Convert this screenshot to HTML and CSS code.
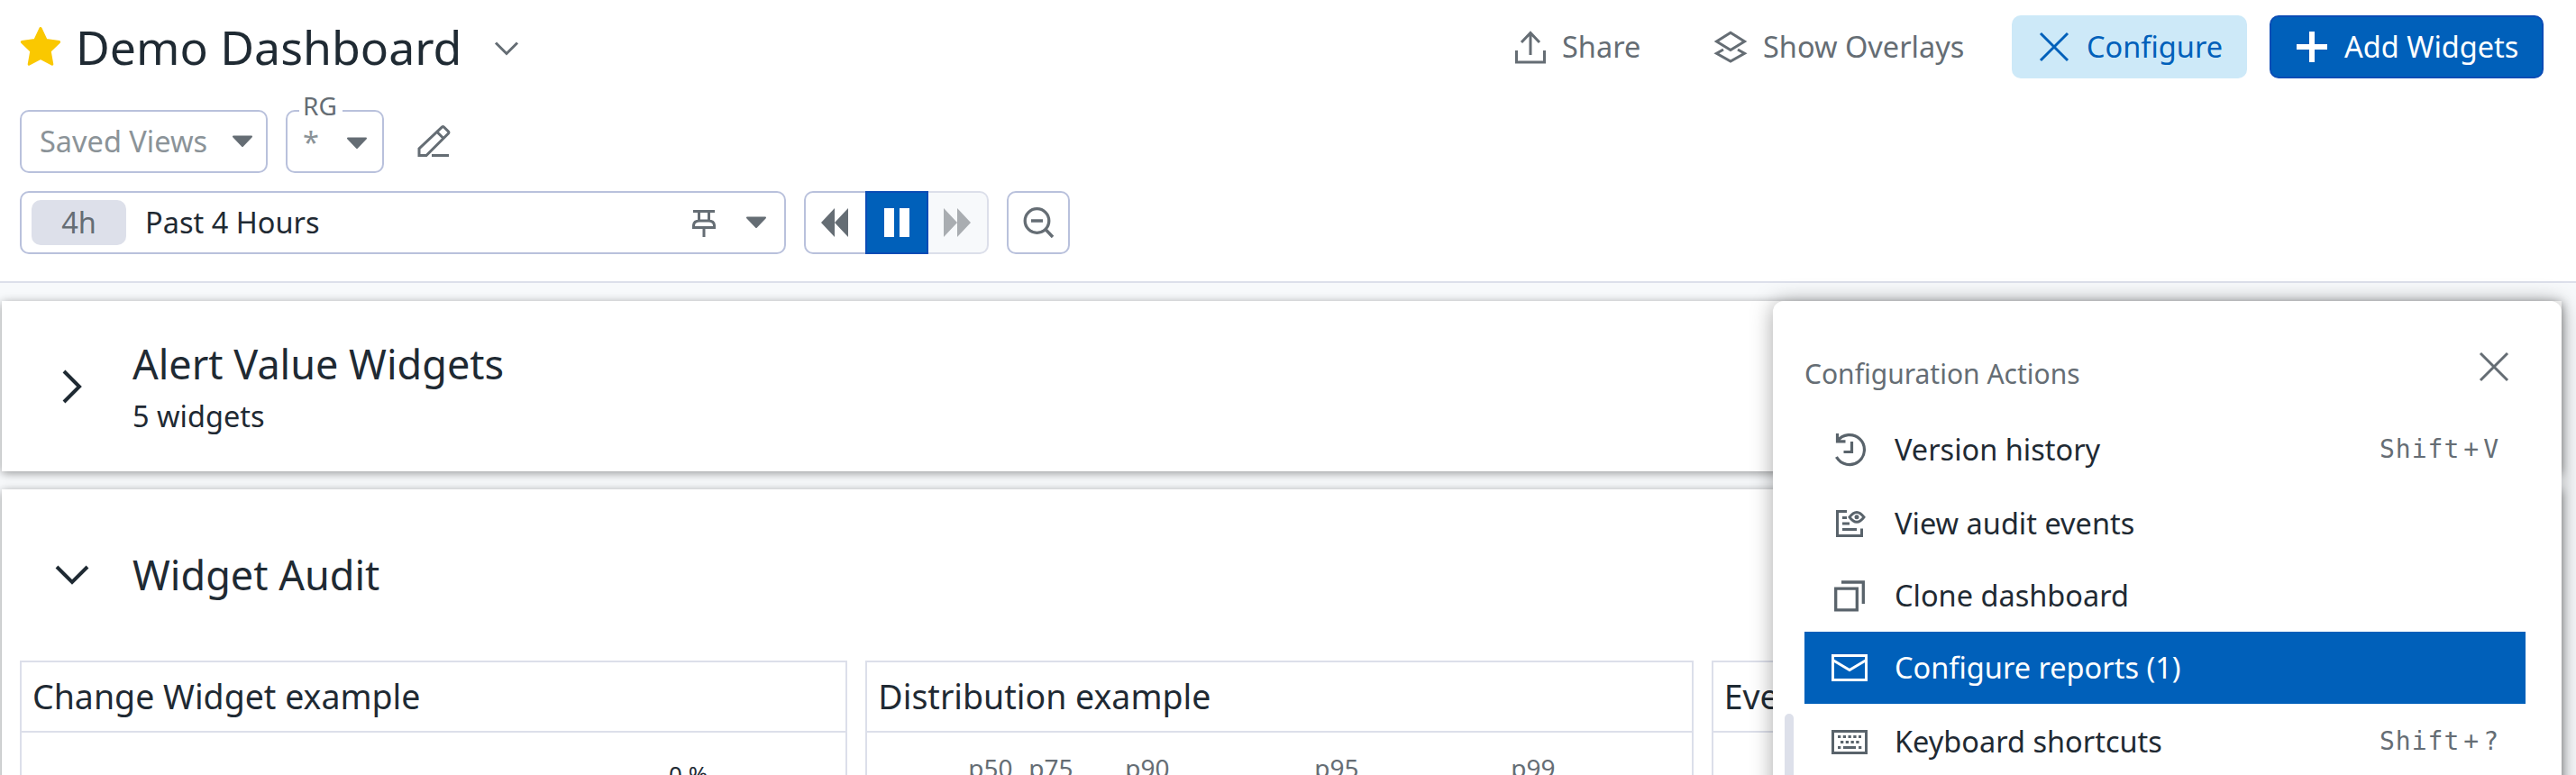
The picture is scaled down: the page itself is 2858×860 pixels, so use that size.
FILE: index.html
```html
<!DOCTYPE html>
<html lang="en">
<head>
<meta charset="utf-8">
<title>Demo Dashboard</title>
<link rel="stylesheet" href="styles.css">
</head>
<body>
<header class="header">
  <div class="title-row">
    <svg class="star" width="46" height="44" viewBox="0 0 46 44"><path d="M23 1.5 29.2 14.6 43.6 16.6 33.2 26.8 35.8 41.2 23 34.4 10.2 41.2 12.8 26.8 2.4 16.6 16.8 14.6Z" fill="#fac800" stroke="#fac800" stroke-width="3" stroke-linejoin="round"/></svg>
    <h1 class="title">Demo Dashboard</h1>
    <svg class="title-chevron" width="28" height="18" viewBox="0 0 28 18"><path d="M2 2.5 14 14.5 26 2.5" fill="none" stroke="#656d74" stroke-width="3"/></svg>
    <div class="actions">
      <button class="btn share"><svg width="36" height="38" viewBox="0 0 36 38" fill="none" stroke="#656d74" stroke-width="3"><path d="M2.500 23V36H33.500V23M18 28V4M8 14 18 3.500 28 14"/></svg>Share</button>
      <button class="btn overlays"><svg width="38" height="36" viewBox="0 0 38 36" fill="none" stroke="#656d74" stroke-width="3"><path d="M19 2.200 34.500 12 19 21.500 3.500 12ZM11 21 3.500 25.200 19 34 34.500 25.200 27 21"/></svg>Show Overlays</button>
      <button class="btn configure"><svg width="34" height="34" viewBox="0 0 34 34"><path d="M2 2 32 32M32 2 2 32" stroke="#0060ba" stroke-width="3"/></svg>Configure</button>
      <button class="btn add"><svg width="34" height="34" viewBox="0 0 34 34"><path d="M17 0V34M0 17H34" stroke="#fff" stroke-width="6"/></svg>Add Widgets</button>
    </div>
  </div>
  <div class="filter-row">
    <div class="select saved"><span>Saved Views</span><svg class="caret" width="24" height="14" viewBox="0 0 24 14"><path d="M2 1.500H22L12 12Z" fill="#656d74" stroke="#656d74" stroke-width="2" stroke-linejoin="round"/></svg></div>
    <div class="select rg"><span class="legend">RG</span><span class="any">*</span><svg class="caret" width="24" height="14" viewBox="0 0 24 14"><path d="M2 1.500H22L12 12Z" fill="#656d74" stroke="#656d74" stroke-width="2" stroke-linejoin="round"/></svg></div>
    <svg class="pencil" width="38" height="38" viewBox="0 0 38 38" fill="none" stroke="#656d74" stroke-width="3"><path d="M3 34.500V27L28.500 2.800Q29.500 2 30.500 3L35.500 8Q36.300 9 35.500 10L11 34.500ZM23 8.500 30 15.500M17 34.500H36"/></svg>
  </div>
  <div class="time-row">
    <div class="time"><span class="pill">4h</span><span>Past 4 Hours</span>
      <svg class="pin" width="26" height="31" viewBox="0 0 26 31" fill="none" stroke="#656d74" stroke-width="3"><path d="M1 2.500H25M7.500 2V12M18.500 2V12M1.500 20.500V18Q2 13 8 13H18Q24 13 24.500 18V20.500ZM13 20V31"/></svg>
      <svg class="caret" width="24" height="14" viewBox="0 0 24 14"><path d="M2 1.500H22L12 12Z" fill="#656d74" stroke="#656d74" stroke-width="2" stroke-linejoin="round"/></svg></div>
    <div class="playback">
      <span class="step back"><svg width="32" height="32" viewBox="0 0 32 32"><path d="M16 0V32L1 16ZM31 0V32L16 16Z" fill="#656d74"/></svg></span>
      <span class="step pause"><svg width="28" height="32" viewBox="0 0 28 32"><path d="M0 0H11V32H0ZM17 0H28V32H17Z" fill="#fff"/></svg></span>
      <span class="step forward"><svg width="32" height="32" viewBox="0 0 32 32"><path d="M1 0V32L16 16ZM16 0V32L31 16Z" fill="#a9adb1"/></svg></span>
    </div>
    <div class="zoom-out"><svg width="36" height="36" viewBox="0 0 36 36" fill="none" stroke="#656d74"><circle cx="16.500" cy="16" r="13.300" stroke-width="3.300"/><path d="M26 25.500 34 34" stroke-width="3.500"/><path d="M10 16H23" stroke-width="3.500"/></svg></div>
  </div>
</header>

<main class="board">
  <section class="group collapsed">
    <svg class="group-icon" width="38" height="38" viewBox="0 0 38 38"><path d="M10 2 27 19 10 36" fill="none" stroke="#1f2a33" stroke-width="4"/></svg>
    <div><h2 class="group-title">Alert Value Widgets</h2><p class="group-sub">5 widgets</p></div>
  </section>
  <section class="group">
    <div class="group-head">
      <svg class="group-icon" width="38" height="38" viewBox="0 0 38 38"><path d="M2 10 19 27 36 10" fill="none" stroke="#1f2a33" stroke-width="4"/></svg>
      <h2 class="group-title">Widget Audit</h2>
    </div>
    <div class="widgets">
      <article class="widget"><h3>Change Widget example</h3><div class="change-value">0 %</div></article>
      <article class="widget"><h3>Distribution example</h3>
        <div class="percentiles"><span>p50</span><span>p75</span><span>p90</span><span>p95</span><span>p99</span></div></article>
      <article class="widget"><h3>Event</h3></article>
    </div>
  </section>
</main>

<aside class="menu">
  <div class="menu-head"><span>Configuration Actions</span><svg width="34" height="34" viewBox="0 0 34 34"><path d="M2 2 32 32M32 2 2 32" stroke="#656d74" stroke-width="3"/></svg></div>
  <ul class="menu-list">
    <li class="gap-after"><svg width="40" height="40" viewBox="0 0 40 40" fill="none" stroke="#59636b" stroke-width="3.200"><path d="M6.500 10.500A16.500 16.500 0 1 1 5.500 28M6.500 2V10.800H15.500M22.500 11V22.500H13.500"/></svg>Version history<kbd>Shift<i>+</i>V</kbd></li>
    <li><svg width="40" height="40" viewBox="0 0 40 40" fill="none" stroke="#59636b" stroke-width="3"><path d="M17 6.500H6.500V33.500H33.500V25.500M12 13.500H17M12 20H20M12 26.500H28"/><path d="M20 12.800Q28 2 36 12.800Q28 23.600 20 12.800Z"/><circle cx="28" cy="12.800" r="2.500" fill="#59636b" stroke="none"/></svg>View audit events</li>
    <li><svg width="40" height="40" viewBox="0 0 40 40" fill="none" stroke="#59636b" stroke-width="3.300"><path d="M4.700 12.200H28.300V35.800H4.700ZM11 5H35.300V29"/></svg>Clone dashboard</li>
    <li class="active gap-after"><svg width="40" height="40" viewBox="0 0 40 40" fill="none" stroke="#fff" stroke-width="3"><path d="M1.500 6.500H38.500V33.500H1.500ZM1.500 11.500 20 22.500 38.500 11.500"/></svg>Configure reports (1)</li>
    <li><svg width="40" height="40" viewBox="0 0 40 40" fill="none" stroke="#59636b" stroke-width="3"><path d="M1.500 8.500H38.500V32.500H1.500Z"/><path d="M7 14.500H33" stroke-dasharray="3.300 2.450"/><path d="M10 20.500H31" stroke-dasharray="3.300 2.450"/><path d="M7 26.500H10.300M13 26.500H27M30 26.500H33.300"/></svg>Keyboard shortcuts<kbd>Shift<i>+</i>?</kbd></li>
  </ul>
  <div class="scroll-thumb"></div>
</aside>
</body>
</html>
```
FILE: styles.css
```css
* { box-sizing: border-box; }
html { height: 860px; overflow: hidden; }
body {
  margin: 0;
  position: relative;
  height: 860px;
  overflow: hidden;
  background: #f7f9fb;
  color: #1f2a33;
  font: 32.5px/44px "Noto Sans", sans-serif;
}
h1, h2, h3, p, ul { margin: 0; padding: 0; font-weight: 400; }
svg { display: block; flex: none; }

.header {
  height: 314px;
  padding: 17px 36px 0 22px;
  background: #fff;
  border-bottom: 2px solid #dcdfea;
}
.title-row, .filter-row, .time-row { display: flex; align-items: center; height: 70px; }
.title { margin-left: 16px; font-size: 51.8px; line-height: 70px; white-space: nowrap; }
.title-chevron { margin: 4px 0 0 36px; }
.actions { display: flex; margin-left: auto; }
.btn {
  display: flex;
  align-items: center;
  height: 70px;
  padding: 0;
  border: 0;
  border-radius: 10px;
  background: none;
  color: #656d74;
  font: inherit;
  white-space: nowrap;
}
.share { width: 221px; gap: 17px; }
.overlays { width: 331px; gap: 17px; }
.configure { width: 261px; padding-left: 30px; gap: 19px; background: #cde9f8; color: #0060ba; }
.add { width: 304px; margin-left: 25px; padding-left: 28px; gap: 19px; border: 2px solid #0a4cb5; background: #0060ba; color: #fff; }

.filter-row { margin-top: 35px; }
.select {
  position: relative;
  display: flex;
  align-items: center;
  justify-content: space-between;
  height: 70px;
  border: 2px solid #b9c1dc;
  border-radius: 10px;
  color: #8b9398;
}
.saved { width: 275px; padding: 0 14px 0 20px; }
.rg { width: 109px; margin-left: 20px; padding: 0 16px 0 17px; }
.any { padding-top: 2px; }
.rg .caret { margin-top: 4px; }
.legend {
  position: absolute;
  left: 13px;
  top: -25px;
  padding: 0 6px 0 4px;
  background: #fff;
  color: #656d74;
  font-size: 28px;
  line-height: 36px;
}
.pencil { margin-left: 36px; }

.time-row { margin-top: 20px; }
.time {
  display: flex;
  align-items: center;
  width: 850px;
  height: 70px;
  padding: 0 19px 0 11px;
  border: 2px solid #b9c1dc;
  border-radius: 10px;
}
.pill {
  width: 105px;
  height: 50px;
  margin-right: 21px;
  border-radius: 10px;
  background: #dde0ea;
  color: #656d74;
  line-height: 50px;
  text-align: center;
}
.pin { margin: 1px 33px 0 auto; }
.playback { display: flex; margin-left: 20px; }
.step { display: flex; align-items: center; justify-content: center; height: 70px; }
.back { width: 68px; border: 2px solid #b9c1dc; border-right: 0; border-radius: 10px 0 0 10px; }
.pause { width: 70px; border: 2px solid #0a4cb5; background: #0060ba; }
.forward { width: 67px; border: 2px solid #dcdfea; border-left: 0; border-radius: 0 10px 10px 0; background: #f7f9fb; }
.back svg, .forward svg { margin-right: 2px; }
.zoom-out {
  display: flex;
  align-items: center;
  justify-content: center;
  width: 70px;
  height: 70px;
  margin-left: 20px;
  border: 2px solid #b9c1dc;
  border-radius: 10px;
}

.board { padding: 20px 16px 0 2px; }
.group { height: 340px; background: #fff; box-shadow: 0 2px 10px rgba(0, 0, 0, .4); }
.collapsed { display: flex; align-items: center; height: 189px; margin-bottom: 20px; }
.group-icon { margin: 0 48px 0 59px; }
.group-title { font-size: 45px; line-height: 60px; }
.group-sub { margin-top: 6px; }
.group-head { display: flex; align-items: center; height: 190px; }
.widgets { display: grid; grid-template-columns: repeat(3, 1fr); gap: 20px; width: 2795px; margin-left: 20px; }
.widget { height: 300px; border: 2px solid #dcdfea; }
.widget h3 { height: 78px; padding-left: 12px; border-bottom: 2px solid #dcdfea; font-size: 37.5px; line-height: 76px; }
.change-value { padding: 28px 0 0 718px; font-size: 26px; line-height: 36px; }
.percentiles { display: flex; padding: 21px 0 0 112px; color: #656d74; font-size: 28px; line-height: 36px; }
.percentiles span { width: 67px; }
.percentiles span:nth-child(2) { width: 107px; }
.percentiles span:nth-child(3) { width: 210px; }
.percentiles span:nth-child(4) { width: 218px; }

.menu {
  position: absolute;
  top: 334px;
  right: 16px;
  width: 875px;
  height: 600px;
  padding: 0 40px 0 35px;
  border-radius: 12px;
  background: #fff;
  box-shadow: 0 2px 24px rgba(0, 0, 0, .35);
}
.menu-head { display: flex; align-items: center; justify-content: space-between; height: 125px; padding: 37px 18px 0 0; color: #656d74; font-size: 30px; }
.menu-head svg { margin-top: -16px; }
.menu-list { list-style: none; }
.menu-list li { display: flex; align-items: center; height: 80px; padding-left: 30px; }
.menu-list li svg { margin-right: 30px; }
.menu-list .gap-after { margin-bottom: 2px; }
.menu-list .active { background: #0060ba; color: #fff; }
kbd { margin: 0 29px 0 auto; color: #656d74; font: 28px/44px "DejaVu Sans Mono", monospace; letter-spacing: 1px; }
kbd i { margin: 0 4px; font-style: normal; }
.scroll-thumb { position: absolute; left: 13px; top: 458px; width: 10px; height: 140px; border-radius: 5px; background: #dde0ea; }
```
